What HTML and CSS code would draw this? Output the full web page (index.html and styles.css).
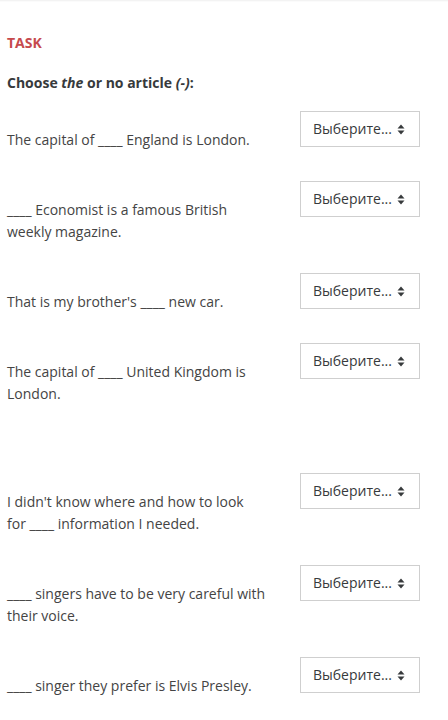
FILE: index.html
```html
<!DOCTYPE html>
<html lang="en">
<head>
<meta charset="utf-8">
<link rel="stylesheet" href="styles.css">
</head>
<body>
<div class="topline"></div>
<main class="question">
  <h3 class="task">TASK</h3>
  <p class="prompt">Choose <em>the</em> or no article <em>(-)</em>:</p>
  <div class="row">
    <p class="text">The capital of ____ England is London.</p>
    <div class="select"><span>Выберите...</span><svg class="arrows" width="8" height="11" viewBox="0 0 8 11"><path d="M4 0.5 L7.5 4.5 H0.5 Z M4 10.5 L7.5 6.5 H0.5 Z" fill="#373a3c"/></svg></div>
  </div>
  <div class="row">
    <p class="text">____ Economist is a famous British weekly magazine.</p>
    <div class="select"><span>Выберите...</span><svg class="arrows" width="8" height="11" viewBox="0 0 8 11"><path d="M4 0.5 L7.5 4.5 H0.5 Z M4 10.5 L7.5 6.5 H0.5 Z" fill="#373a3c"/></svg></div>
  </div>
  <div class="row">
    <p class="text">That is my brother's ____ new car.</p>
    <div class="select"><span>Выберите...</span><svg class="arrows" width="8" height="11" viewBox="0 0 8 11"><path d="M4 0.5 L7.5 4.5 H0.5 Z M4 10.5 L7.5 6.5 H0.5 Z" fill="#373a3c"/></svg></div>
  </div>
  <div class="row row-extra">
    <p class="text">The capital of ____ United Kingdom is London.</p>
    <div class="select"><span>Выберите...</span><svg class="arrows" width="8" height="11" viewBox="0 0 8 11"><path d="M4 0.5 L7.5 4.5 H0.5 Z M4 10.5 L7.5 6.5 H0.5 Z" fill="#373a3c"/></svg></div>
  </div>
  <div class="row">
    <p class="text">I didn't know where and how to look for&nbsp;____ information I needed.</p>
    <div class="select"><span>Выберите...</span><svg class="arrows" width="8" height="11" viewBox="0 0 8 11"><path d="M4 0.5 L7.5 4.5 H0.5 Z M4 10.5 L7.5 6.5 H0.5 Z" fill="#373a3c"/></svg></div>
  </div>
  <div class="row">
    <p class="text">____ singers have to be very careful with their voice.</p>
    <div class="select"><span>Выберите...</span><svg class="arrows" width="8" height="11" viewBox="0 0 8 11"><path d="M4 0.5 L7.5 4.5 H0.5 Z M4 10.5 L7.5 6.5 H0.5 Z" fill="#373a3c"/></svg></div>
  </div>
  <div class="row">
    <p class="text">____ singer they prefer is Elvis Presley.</p>
    <div class="select"><span>Выберите...</span><svg class="arrows" width="8" height="11" viewBox="0 0 8 11"><path d="M4 0.5 L7.5 4.5 H0.5 Z M4 10.5 L7.5 6.5 H0.5 Z" fill="#373a3c"/></svg></div>
  </div>
</main>
</body>
</html>
```

FILE: styles.css
```css
html, body {
  margin: 0;
  padding: 0;
  background: #ffffff;
}
body {
  font-family: "Open Sans", "Noto Sans", sans-serif;
  color: #373a3c;
  font-size: 14px;
  line-height: 22px;
}
.topline {
  height: 2px;
  background: linear-gradient(#efefef, #ffffff);
}
.question {
  padding: 0 28px 0 7px;
}
.task {
  margin: 31px 0 0 0;
  font-size: 14px;
  line-height: 20px;
  font-weight: 700;
  color: #c64a4d;
}
.prompt {
  margin: 20px 0 0 0;
  font-weight: 700;
  line-height: 20px;
}
.prompt em {
  font-style: italic;
}
.row {
  display: flex;
  justify-content: space-between;
  align-items: flex-start;
  margin-bottom: 30px;
}
.prompt + .row {
  margin-top: 18px;
}
.row-extra {
  margin-bottom: 68px;
}
.text {
  margin: 0;
  padding-top: 18px;
  width: 268px;
  color: #444;
}
.select {
  box-sizing: border-box;
  width: 120px;
  height: 36px;
  border: 1px solid #cfcfcf;
  display: flex;
  align-items: center;
  justify-content: space-between;
  padding: 0 14px 0 12px;
  font-size: 14px;
  color: #373a3c;
  flex-shrink: 0;
}
.arrows {
  display: block;
}
```
